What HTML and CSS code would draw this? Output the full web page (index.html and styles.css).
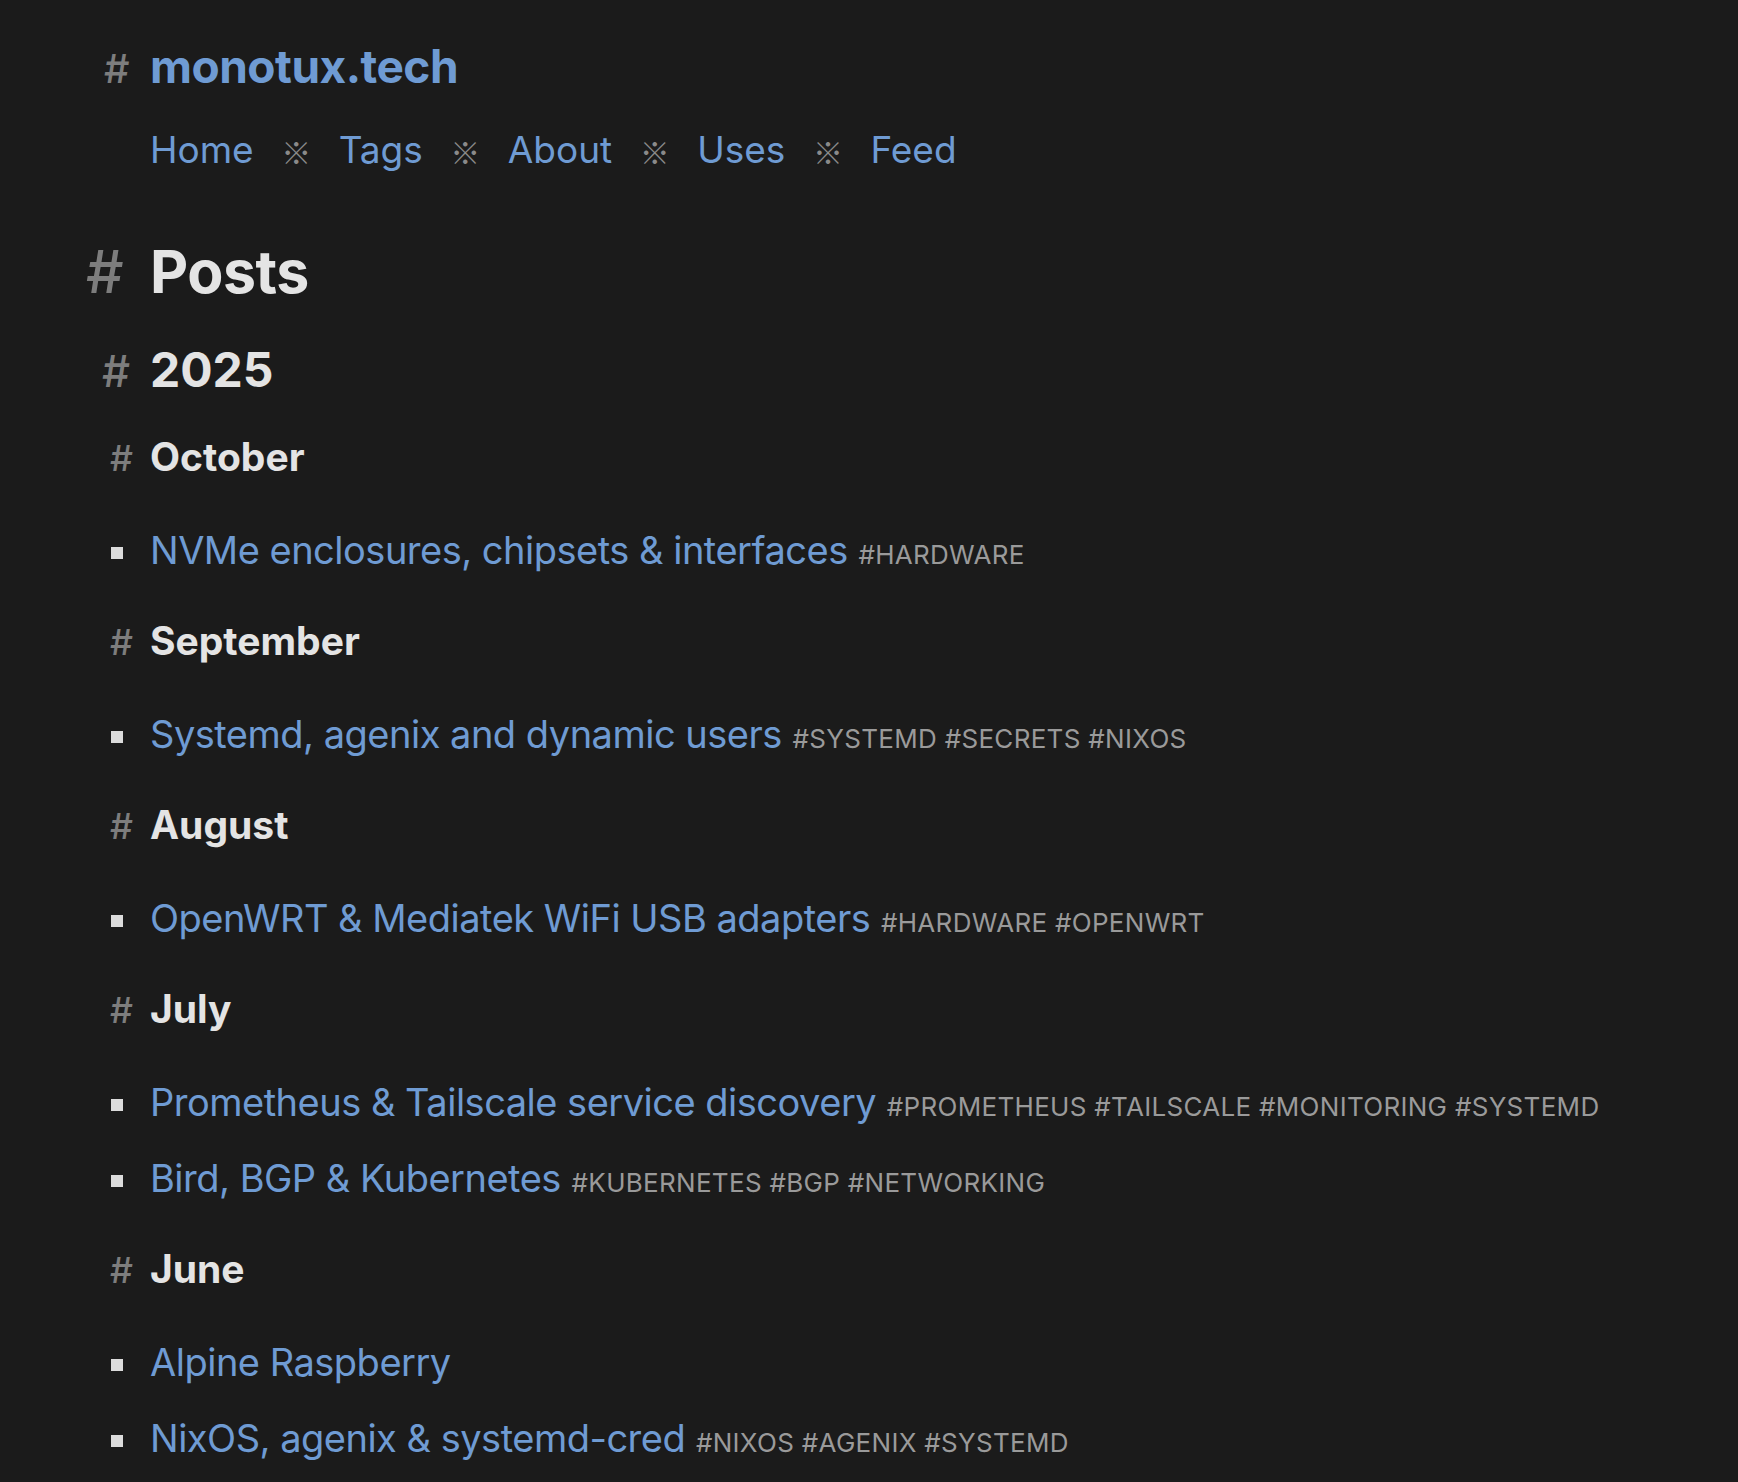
FILE: index.html
```html
<!DOCTYPE html>
<html lang="en">
<head>
<meta charset="utf-8">
<title>monotux.tech</title>
<link rel="stylesheet" href="styles.css">
</head>
<body>
<div class="page">
  <header class="site">
    <h1 class="site-title"><span class="hash">#</span><a href="#">monotux.tech</a></h1>
    <nav class="nav">
      <a href="#">Home</a><span class="sep">※</span>
      <a href="#">Tags</a><span class="sep">※</span>
      <a href="#">About</a><span class="sep">※</span>
      <a href="#">Uses</a><span class="sep">※</span>
      <a href="#">Feed</a>
    </nav>
  </header>
  <main class="posts">
    <h1 class="posts-title"><span class="hash">#</span>Posts</h1>
    <section class="year">
      <h2 class="year-title"><span class="hash">#</span>2025</h2>
      <section class="month">
        <h3 class="month-title"><span class="hash">#</span>October</h3>
        <ul class="post-list">
          <li><a href="#">NVMe enclosures, chipsets &amp; interfaces</a> <span class="tags">#hardware</span></li>
        </ul>
      </section>
      <section class="month">
        <h3 class="month-title"><span class="hash">#</span>September</h3>
        <ul class="post-list">
          <li><a href="#">Systemd, agenix and dynamic users</a> <span class="tags">#systemd #secrets #nixos</span></li>
        </ul>
      </section>
      <section class="month">
        <h3 class="month-title"><span class="hash">#</span>August</h3>
        <ul class="post-list">
          <li><a href="#">OpenWRT &amp; Mediatek WiFi USB adapters</a> <span class="tags">#hardware #openwrt</span></li>
        </ul>
      </section>
      <section class="month">
        <h3 class="month-title"><span class="hash">#</span>July</h3>
        <ul class="post-list">
          <li><a href="#">Prometheus &amp; Tailscale service discovery</a> <span class="tags">#prometheus #tailscale #monitoring #systemd</span></li>
          <li><a href="#">Bird, BGP &amp; Kubernetes</a> <span class="tags">#kubernetes #bgp #networking</span></li>
        </ul>
      </section>
      <section class="month">
        <h3 class="month-title"><span class="hash">#</span>June</h3>
        <ul class="post-list">
          <li><a href="#">Alpine Raspberry</a></li>
          <li><a href="#">NixOS, agenix &amp; systemd-cred</a> <span class="tags">#nixos #agenix #systemd</span></li>
        </ul>
      </section>
    </section>
  </main>
</div>
</body>
</html>
```

FILE: styles.css
```css
html, body {
  margin: 0;
  padding: 0;
  background: #1b1b1b;
}

body {
  font-family: "Inter", "Noto Sans", "Liberation Sans", sans-serif;
  color: #e2e2e2;
  font-size: 38px;
}

a {
  color: #6f9bd3;
  text-decoration: none;
}

.page {
  padding: 36px 0 0 150px;
}

h1, h2, h3 {
  margin: 0;
  font-weight: 700;
  color: #e4e4e4;
}

.hash {
  display: inline-block;
  color: #7d7d7d;
  text-align: right;
  font-weight: 500;
  line-height: 1;
}

.site-title {
  font-size: 46px;
  line-height: 60px;
  letter-spacing: -0.5px;
}
.site-title .hash {
  width: 50px;
  margin-left: -71px;
  margin-right: 21px;
  font-size: 40px;
}

.nav {
  margin-top: 29px;
  display: flex;
  align-items: baseline;
  gap: 27.5px;
  font-size: 37px;
  line-height: 50px;
}

.sep {
  font-family: "Noto Sans CJK JP", "DejaVu Sans", sans-serif;
  font-size: 30px;
  font-weight: 700;
  line-height: 1;
  color: #8a8a8a;
  position: relative;
  top: 1px;
}

.posts-title {
  margin-top: 61px;
  font-size: 59px;
  line-height: 72px;
  letter-spacing: -0.5px;
}
.posts-title .hash {
  width: 40px;
  margin-left: -64px;
  margin-right: 24px;
  text-align: left;
}

.year-title {
  margin-top: 32px;
  font-size: 48px;
  line-height: 60px;
}
.year-title .hash {
  width: 40px;
  margin-left: -60px;
  margin-right: 20px;
  font-size: 44px;
}

.month {
  margin-top: 39px;
}
.month:first-of-type {
  margin-top: 31px;
}

.month-title {
  font-size: 39px;
  line-height: 52px;
}
.month-title .hash {
  width: 30px;
  margin-left: -47px;
  margin-right: 17px;
  font-size: 36px;
}

.post-list {
  list-style: none;
  margin: 41px 0 0 0;
  padding: 0;
}

.post-list li {
  font-size: 38px;
  line-height: 52px;
}
.post-list li a {
  letter-spacing: -0.5px;
}
.post-list li + li {
  margin-top: 24px;
}

.post-list li::before {
  content: "";
  display: inline-block;
  width: 12px;
  height: 12px;
  background: #dcdcdc;
  margin-left: -39px;
  margin-right: 27px;
  vertical-align: 5px;
}

.tags {
  font-size: 26px;
  line-height: 1;
  letter-spacing: 0.3px;
  text-transform: uppercase;
  color: #9a9a9a;
}
```
